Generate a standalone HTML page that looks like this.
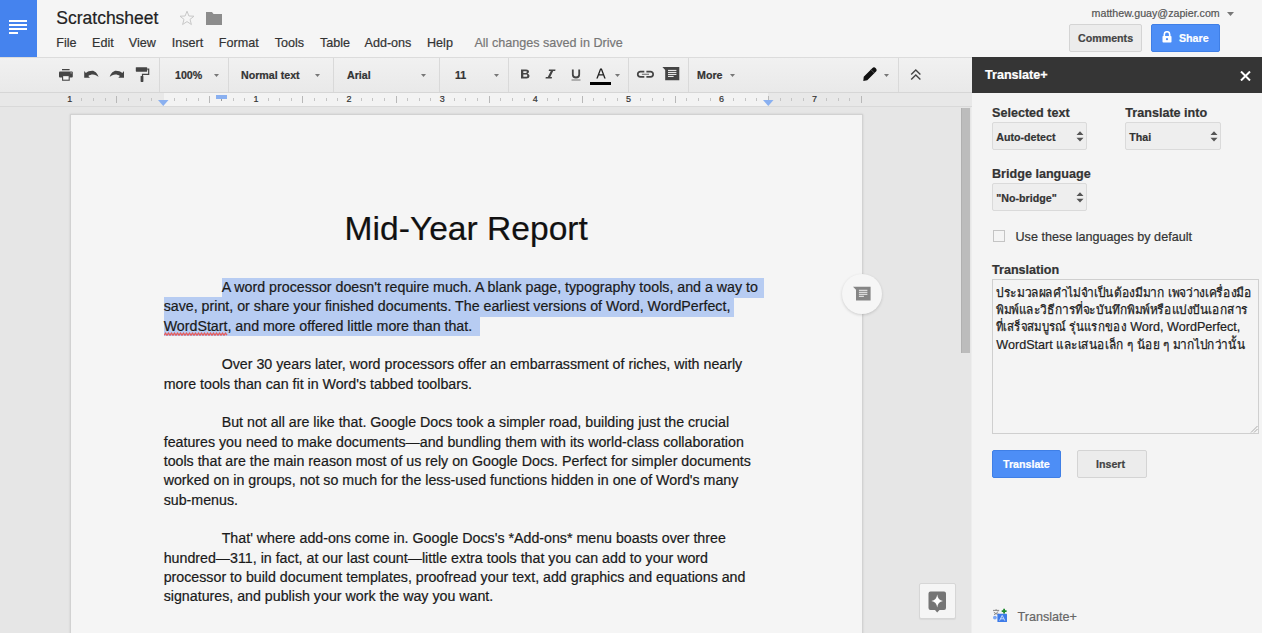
<!DOCTYPE html>
<html><head><meta charset="utf-8"><title>Scratchsheet - Google Docs</title>
<style>
html,body{margin:0;padding:0;}
body{width:1262px;height:633px;overflow:hidden;position:relative;background:#e5e5e5;font-family:"Liberation Sans", sans-serif;}
.t{position:absolute;white-space:nowrap;-webkit-text-stroke:0.2px currentColor;}
</style></head><body>
<div style="position:absolute;left:0px;top:0px;width:1262px;height:57px;background:#f5f5f5"></div>
<div style="position:absolute;left:0px;top:57px;width:972px;height:1px;background:#dcdcdc"></div>
<div style="position:absolute;left:0px;top:58px;width:972px;height:34px;background:linear-gradient(#f1f1f1,#e9e9e9)"></div>
<div style="position:absolute;left:0px;top:92px;width:972px;height:1px;background:#d6d6d6"></div>
<div style="position:absolute;left:0px;top:93px;width:972px;height:13px;background:#e8e8e8"></div>
<div style="position:absolute;left:164px;top:93px;width:604px;height:13px;background:#f3f3f3"></div>
<div style="position:absolute;left:0px;top:106px;width:972px;height:1px;background:#d9d9d9"></div>
<div style="position:absolute;left:0px;top:107px;width:972px;height:526px;background:#e6e6e6"></div>
<div style="position:absolute;left:70px;top:114px;width:793px;height:530px;background:#f5f5f5;border:1px solid #d2d2d2;box-sizing:border-box;box-shadow:0 0 2px rgba(0,0,0,0.12)"></div>
<div style="position:absolute;left:971px;top:107px;width:1px;height:526px;background:#ededed"></div>
<div style="position:absolute;left:961px;top:108px;width:9px;height:245px;background:#bcbcbc;border-left:1px solid #b0b0b0;box-sizing:border-box"></div>
<div style="position:absolute;left:0px;top:0px;width:37px;height:57px;background:#4583ee"></div>
<div style="position:absolute;left:9px;top:20px;width:18px;height:2px;background:#fff"></div>
<div style="position:absolute;left:9px;top:24px;width:18px;height:2px;background:#fff"></div>
<div style="position:absolute;left:9px;top:28px;width:18px;height:2px;background:#fff"></div>
<div style="position:absolute;left:9px;top:32px;width:9px;height:2px;background:#fff"></div>
<div class="t" style="left:56.30px;top:10.39px;font-size:17.5px;line-height:17.5px;font-weight:400;color:#222;">Scratchsheet</div>
<svg style="position:absolute;left:179px;top:10px" width="16" height="16" viewBox="0 0 16 16"><path d="M8 1.2 L9.9 6 L15 6.2 L11 9.4 L12.4 14.5 L8 11.6 L3.6 14.5 L5 9.4 L1 6.2 L6.1 6 Z" fill="none" stroke="#c8c8c8" stroke-width="1"/></svg>
<svg style="position:absolute;left:206px;top:12px" width="16" height="13" viewBox="0 0 16 13"><path d="M0 0 H6 L7.5 2 H16 V13 H0 Z" fill="#8c8c8c"/></svg>
<div class="t" style="left:56.20px;top:36.63px;font-size:12.6px;line-height:12.6px;font-weight:400;color:#333;">File</div>
<div class="t" style="left:92.00px;top:36.63px;font-size:12.6px;line-height:12.6px;font-weight:400;color:#333;">Edit</div>
<div class="t" style="left:128.80px;top:36.63px;font-size:12.6px;line-height:12.6px;font-weight:400;color:#333;">View</div>
<div class="t" style="left:171.70px;top:36.63px;font-size:12.6px;line-height:12.6px;font-weight:400;color:#333;">Insert</div>
<div class="t" style="left:218.80px;top:36.63px;font-size:12.6px;line-height:12.6px;font-weight:400;color:#333;">Format</div>
<div class="t" style="left:274.70px;top:36.63px;font-size:12.6px;line-height:12.6px;font-weight:400;color:#333;">Tools</div>
<div class="t" style="left:319.90px;top:36.63px;font-size:12.6px;line-height:12.6px;font-weight:400;color:#333;">Table</div>
<div class="t" style="left:364.50px;top:36.63px;font-size:12.6px;line-height:12.6px;font-weight:400;color:#333;">Add-ons</div>
<div class="t" style="left:427.00px;top:36.63px;font-size:12.6px;line-height:12.6px;font-weight:400;color:#333;">Help</div>
<div class="t" style="left:474.40px;top:36.63px;font-size:12.6px;line-height:12.6px;font-weight:400;color:#777;">All changes saved in Drive</div>
<div class="t" style="left:1091.60px;top:8.08px;font-size:10.66px;line-height:10.66px;font-weight:400;color:#555;">matthew.guay@zapier.com</div>
<svg style="position:absolute;left:1227px;top:12px" width="7" height="4" viewBox="0 0 7 4"><path d="M0 0 H7 L3.5 4 Z" fill="#777"/></svg>
<div style="position:absolute;left:1069px;top:24px;width:73px;height:28px;background:#ececec;border:1px solid #d4d4d4;border-radius:2px;box-sizing:border-box"></div>
<div class="t" style="left:1078.00px;top:32.98px;font-size:10.66px;line-height:10.66px;font-weight:700;color:#444;">Comments</div>
<div style="position:absolute;left:1151px;top:24px;width:69px;height:28px;background:#4d8ef6;border:1px solid #3f7fe6;border-radius:2px;box-sizing:border-box"></div>
<svg style="position:absolute;left:1162px;top:31px" width="10" height="12" viewBox="0 0 10 12"><path d="M2.3 5 V3.4 A2.7 2.7 0 0 1 7.7 3.4 V5" fill="none" stroke="#fff" stroke-width="1.6"/><rect x="0.5" y="5" width="9" height="6.5" rx="0.8" fill="#fff"/><circle cx="5" cy="8.2" r="1.1" fill="#4d8ef6"/></svg>
<div class="t" style="left:1179.00px;top:32.98px;font-size:10.66px;line-height:10.66px;font-weight:700;color:#fff;">Share</div>
<div style="position:absolute;left:159px;top:58px;width:1px;height:34px;background:#d9d9d9"></div>
<div style="position:absolute;left:228px;top:58px;width:1px;height:34px;background:#d9d9d9"></div>
<div style="position:absolute;left:333px;top:58px;width:1px;height:34px;background:#d9d9d9"></div>
<div style="position:absolute;left:439px;top:58px;width:1px;height:34px;background:#d9d9d9"></div>
<div style="position:absolute;left:508px;top:58px;width:1px;height:34px;background:#d9d9d9"></div>
<div style="position:absolute;left:628px;top:58px;width:1px;height:34px;background:#d9d9d9"></div>
<div style="position:absolute;left:688px;top:58px;width:1px;height:34px;background:#d9d9d9"></div>
<div style="position:absolute;left:898px;top:58px;width:1px;height:34px;background:#d9d9d9"></div>
<svg style="position:absolute;left:59px;top:69px" width="14" height="12" viewBox="0 0 14 12">
<rect x="3" y="0" width="7.6" height="1.3" fill="#444"/><rect x="0" y="2.4" width="13.8" height="6.2" rx="1" fill="#444"/>
<rect x="3.6" y="6.6" width="6.6" height="4.6" fill="#f4f4f4" stroke="#444" stroke-width="1.1"/><rect x="11.6" y="3.4" width="1" height="1" fill="#ddd"/></svg>
<svg style="position:absolute;left:83px;top:70px" width="17" height="9" viewBox="0 0 17 9">
<path d="M1.2 1 V7.7 H6.9 L5.3 5.9 C8 3.9 12.6 3.6 15.5 7.1 C14.3 3 11.5 0.8 9.3 0.8 C6.8 0.8 4.5 1.6 2.9 2.9 Z" fill="#444"/></svg>
<svg style="position:absolute;left:108px;top:70px" width="17" height="9" viewBox="0 0 17 9">
<path transform="translate(17.2,0) scale(-1,1)" d="M1.2 1 V7.7 H6.9 L5.3 5.9 C8 3.9 12.6 3.6 15.5 7.1 C14.3 3 11.5 0.8 9.3 0.8 C6.8 0.8 4.5 1.6 2.9 2.9 Z" fill="#444"/></svg>
<svg style="position:absolute;left:135px;top:66px" width="15" height="17" viewBox="0 0 15 17">
<rect x="0.8" y="1.2" width="11.4" height="4.5" rx="0.6" fill="#444"/><path d="M12.2 3.2 H13.7 V8.4 H7.5 V10" fill="none" stroke="#444" stroke-width="1.2"/>
<rect x="5.6" y="9.9" width="2.8" height="6" rx="0.6" fill="#444"/></svg>
<div class="t" style="left:175.00px;top:69.98px;font-size:10.66px;line-height:10.66px;font-weight:700;color:#333;">100%</div>
<svg style="position:absolute;left:214px;top:73.8px" width="5" height="3" viewBox="0 0 5 3"><path d="M0 0 H5 L2.5 3 Z" fill="#777"/></svg>
<div class="t" style="left:241.00px;top:69.98px;font-size:10.66px;line-height:10.66px;font-weight:700;color:#333;">Normal text</div>
<svg style="position:absolute;left:315px;top:73.8px" width="5" height="3" viewBox="0 0 5 3"><path d="M0 0 H5 L2.5 3 Z" fill="#777"/></svg>
<div class="t" style="left:347.00px;top:69.98px;font-size:10.66px;line-height:10.66px;font-weight:700;color:#333;">Arial</div>
<svg style="position:absolute;left:421px;top:73.8px" width="5" height="3" viewBox="0 0 5 3"><path d="M0 0 H5 L2.5 3 Z" fill="#777"/></svg>
<div class="t" style="left:455.00px;top:69.98px;font-size:10.66px;line-height:10.66px;font-weight:700;color:#333;">11</div>
<svg style="position:absolute;left:494px;top:73.8px" width="5" height="3" viewBox="0 0 5 3"><path d="M0 0 H5 L2.5 3 Z" fill="#777"/></svg>
<svg style="position:absolute;left:520px;top:69px" width="11" height="10" viewBox="0 0 11 10">
<path d="M1 0.5 H6 C8.5 0.5 9 2 9 2.6 C9 3.8 8 4.5 7.5 4.7 C8.5 5 9.5 5.8 9.5 7 C9.5 8.7 8 9.5 6.5 9.5 H1 Z M3.3 2.2 V4 H5.8 C6.6 4 6.9 3.6 6.9 3.1 C6.9 2.6 6.5 2.2 5.8 2.2 Z M3.3 5.6 V7.8 H6.2 C7 7.8 7.3 7.3 7.3 6.7 C7.3 6.1 6.9 5.6 6.1 5.6 Z" fill="#444"/></svg>
<svg style="position:absolute;left:545px;top:69px" width="11" height="10" viewBox="0 0 11 10">
<path d="M4 0.5 H10.5 L10.2 2 H8.2 L5.2 8 H7 L6.7 9.5 H0.5 L0.8 8 H2.8 L5.8 2 H3.7 Z" fill="#444"/></svg>
<svg style="position:absolute;left:571px;top:69px" width="10" height="12" viewBox="0 0 10 12">
<path d="M1.8 0.5 V5.5 C1.8 7.6 3.2 8.5 5 8.5 C6.8 8.5 8.2 7.6 8.2 5.5 V0.5" fill="none" stroke="#444" stroke-width="1.8"/><rect x="0.5" y="10.4" width="9" height="1.2" fill="#888"/></svg>
<svg style="position:absolute;left:596px;top:68px" width="10" height="11" viewBox="0 0 10 11">
<path d="M0.3 10.5 L4.1 0.5 H5.9 L9.7 10.5 H8.2 L7.2 7.6 H2.8 L1.8 10.5 Z M3.3 6.2 H6.7 L5 1.8 Z" fill="#222"/></svg>
<div style="position:absolute;left:590px;top:81.5px;width:21px;height:3.6px;background:#000"></div>
<svg style="position:absolute;left:615px;top:73.8px" width="5" height="3" viewBox="0 0 5 3"><path d="M0 0 H5 L2.5 3 Z" fill="#777"/></svg>
<svg style="position:absolute;left:636px;top:70px" width="19" height="9" viewBox="0 0 19 9">
<path d="M8.3 1.65 H4.35 A2.6 2.6 0 0 0 4.35 6.85 H8.3" fill="none" stroke="#444" stroke-width="1.7"/>
<path d="M10.4 1.65 H14.55 A2.6 2.6 0 0 1 14.55 6.85 H10.4" fill="none" stroke="#444" stroke-width="1.7"/>
<rect x="5.9" y="3.75" width="7.1" height="1" fill="#666"/></svg>
<svg style="position:absolute;left:662px;top:66px" width="18" height="15" viewBox="0 0 18 15">
<path d="M0.4 1 H17.3 V14.2 H3.2 V4 Z" fill="#444"/><rect x="6" y="3.9" width="8.4" height="1.1" fill="#e6e6e6"/><rect x="6" y="5.9" width="8.4" height="1.1" fill="#e6e6e6"/><rect x="6" y="7.9" width="8.4" height="1.1" fill="#e6e6e6"/><rect x="6" y="9.9" width="5.6" height="1.1" fill="#e6e6e6"/></svg>
<div class="t" style="left:697.00px;top:69.98px;font-size:10.66px;line-height:10.66px;font-weight:700;color:#333;">More</div>
<svg style="position:absolute;left:729.5px;top:73.8px" width="5" height="3" viewBox="0 0 5 3"><path d="M0 0 H5 L2.5 3 Z" fill="#777"/></svg>
<svg style="position:absolute;left:862px;top:67px" width="15" height="15" viewBox="0 0 15 15">
<path d="M10.23 1.23 A2.5 2.5 0 0 1 13.77 4.77 L5.27 13.27 L1.3 13.9 L1.73 9.73 Z" fill="#111"/>
<path d="M8.9 2.6 L12.4 6.1" stroke="#888" stroke-width="0.6"/></svg>
<svg style="position:absolute;left:884px;top:73.6px" width="5" height="3" viewBox="0 0 5 3"><path d="M0 0 H5 L2.5 3 Z" fill="#777"/></svg>
<svg style="position:absolute;left:910px;top:69px" width="12" height="12" viewBox="0 0 12 12">
<path d="M1.2 5.4 L5.8 1 L10.4 5.4 M1.2 10.4 L5.8 6 L10.4 10.4" fill="none" stroke="#444" stroke-width="1.4"/></svg>
<div style="position:absolute;left:81px;top:98px;width:1px;height:3px;background:#c4c4c4"></div>
<div style="position:absolute;left:93px;top:98px;width:1px;height:3px;background:#c4c4c4"></div>
<div style="position:absolute;left:105px;top:98px;width:1px;height:3px;background:#c4c4c4"></div>
<div style="position:absolute;left:116px;top:96px;width:1px;height:6.5px;background:#b8b8b8"></div>
<div style="position:absolute;left:128px;top:98px;width:1px;height:3px;background:#c4c4c4"></div>
<div style="position:absolute;left:140px;top:98px;width:1px;height:3px;background:#c4c4c4"></div>
<div style="position:absolute;left:151px;top:98px;width:1px;height:3px;background:#c4c4c4"></div>
<div style="position:absolute;left:174px;top:98px;width:1px;height:3px;background:#c4c4c4"></div>
<div style="position:absolute;left:186px;top:98px;width:1px;height:3px;background:#c4c4c4"></div>
<div style="position:absolute;left:198px;top:98px;width:1px;height:3px;background:#c4c4c4"></div>
<div style="position:absolute;left:209px;top:96px;width:1px;height:6.5px;background:#b8b8b8"></div>
<div style="position:absolute;left:221px;top:98px;width:1px;height:3px;background:#c4c4c4"></div>
<div style="position:absolute;left:233px;top:98px;width:1px;height:3px;background:#c4c4c4"></div>
<div style="position:absolute;left:244px;top:98px;width:1px;height:3px;background:#c4c4c4"></div>
<div style="position:absolute;left:268px;top:98px;width:1px;height:3px;background:#c4c4c4"></div>
<div style="position:absolute;left:279px;top:98px;width:1px;height:3px;background:#c4c4c4"></div>
<div style="position:absolute;left:291px;top:98px;width:1px;height:3px;background:#c4c4c4"></div>
<div style="position:absolute;left:302px;top:96px;width:1px;height:6.5px;background:#b8b8b8"></div>
<div style="position:absolute;left:314px;top:98px;width:1px;height:3px;background:#c4c4c4"></div>
<div style="position:absolute;left:326px;top:98px;width:1px;height:3px;background:#c4c4c4"></div>
<div style="position:absolute;left:337px;top:98px;width:1px;height:3px;background:#c4c4c4"></div>
<div style="position:absolute;left:361px;top:98px;width:1px;height:3px;background:#c4c4c4"></div>
<div style="position:absolute;left:372px;top:98px;width:1px;height:3px;background:#c4c4c4"></div>
<div style="position:absolute;left:384px;top:98px;width:1px;height:3px;background:#c4c4c4"></div>
<div style="position:absolute;left:396px;top:96px;width:1px;height:6.5px;background:#b8b8b8"></div>
<div style="position:absolute;left:407px;top:98px;width:1px;height:3px;background:#c4c4c4"></div>
<div style="position:absolute;left:419px;top:98px;width:1px;height:3px;background:#c4c4c4"></div>
<div style="position:absolute;left:430px;top:98px;width:1px;height:3px;background:#c4c4c4"></div>
<div style="position:absolute;left:454px;top:98px;width:1px;height:3px;background:#c4c4c4"></div>
<div style="position:absolute;left:465px;top:98px;width:1px;height:3px;background:#c4c4c4"></div>
<div style="position:absolute;left:477px;top:98px;width:1px;height:3px;background:#c4c4c4"></div>
<div style="position:absolute;left:489px;top:96px;width:1px;height:6.5px;background:#b8b8b8"></div>
<div style="position:absolute;left:500px;top:98px;width:1px;height:3px;background:#c4c4c4"></div>
<div style="position:absolute;left:512px;top:98px;width:1px;height:3px;background:#c4c4c4"></div>
<div style="position:absolute;left:524px;top:98px;width:1px;height:3px;background:#c4c4c4"></div>
<div style="position:absolute;left:547px;top:98px;width:1px;height:3px;background:#c4c4c4"></div>
<div style="position:absolute;left:558px;top:98px;width:1px;height:3px;background:#c4c4c4"></div>
<div style="position:absolute;left:570px;top:98px;width:1px;height:3px;background:#c4c4c4"></div>
<div style="position:absolute;left:582px;top:96px;width:1px;height:6.5px;background:#b8b8b8"></div>
<div style="position:absolute;left:593px;top:98px;width:1px;height:3px;background:#c4c4c4"></div>
<div style="position:absolute;left:605px;top:98px;width:1px;height:3px;background:#c4c4c4"></div>
<div style="position:absolute;left:617px;top:98px;width:1px;height:3px;background:#c4c4c4"></div>
<div style="position:absolute;left:640px;top:98px;width:1px;height:3px;background:#c4c4c4"></div>
<div style="position:absolute;left:652px;top:98px;width:1px;height:3px;background:#c4c4c4"></div>
<div style="position:absolute;left:663px;top:98px;width:1px;height:3px;background:#c4c4c4"></div>
<div style="position:absolute;left:675px;top:96px;width:1px;height:6.5px;background:#b8b8b8"></div>
<div style="position:absolute;left:686px;top:98px;width:1px;height:3px;background:#c4c4c4"></div>
<div style="position:absolute;left:698px;top:98px;width:1px;height:3px;background:#c4c4c4"></div>
<div style="position:absolute;left:710px;top:98px;width:1px;height:3px;background:#c4c4c4"></div>
<div style="position:absolute;left:733px;top:98px;width:1px;height:3px;background:#c4c4c4"></div>
<div style="position:absolute;left:745px;top:98px;width:1px;height:3px;background:#c4c4c4"></div>
<div style="position:absolute;left:756px;top:98px;width:1px;height:3px;background:#c4c4c4"></div>
<div style="position:absolute;left:768px;top:96px;width:1px;height:6.5px;background:#b8b8b8"></div>
<div style="position:absolute;left:780px;top:98px;width:1px;height:3px;background:#c4c4c4"></div>
<div style="position:absolute;left:791px;top:98px;width:1px;height:3px;background:#c4c4c4"></div>
<div style="position:absolute;left:803px;top:98px;width:1px;height:3px;background:#c4c4c4"></div>
<div style="position:absolute;left:826px;top:98px;width:1px;height:3px;background:#c4c4c4"></div>
<div style="position:absolute;left:838px;top:98px;width:1px;height:3px;background:#c4c4c4"></div>
<div style="position:absolute;left:849px;top:98px;width:1px;height:3px;background:#c4c4c4"></div>
<div style="position:absolute;left:861px;top:96px;width:1px;height:6.5px;background:#b8b8b8"></div>
<div class="t" style="left:67.30px;top:95.08px;font-size:9px;line-height:9px;font-weight:400;color:#333;">1</div>
<div class="t" style="left:253.50px;top:95.08px;font-size:9px;line-height:9px;font-weight:400;color:#333;">1</div>
<div class="t" style="left:346.60px;top:95.08px;font-size:9px;line-height:9px;font-weight:400;color:#333;">2</div>
<div class="t" style="left:439.70px;top:95.08px;font-size:9px;line-height:9px;font-weight:400;color:#333;">3</div>
<div class="t" style="left:532.80px;top:95.08px;font-size:9px;line-height:9px;font-weight:400;color:#333;">4</div>
<div class="t" style="left:625.90px;top:95.08px;font-size:9px;line-height:9px;font-weight:400;color:#333;">5</div>
<div class="t" style="left:719.00px;top:95.08px;font-size:9px;line-height:9px;font-weight:400;color:#333;">6</div>
<div class="t" style="left:812.10px;top:95.08px;font-size:9px;line-height:9px;font-weight:400;color:#333;">7</div>
<svg style="position:absolute;left:158px;top:99.8px" width="11" height="6" viewBox="0 0 11 6"><path d="M0 0 H10.5 L5.25 6 Z" fill="#8ab0f0"/></svg>
<div style="position:absolute;left:216px;top:95px;width:11px;height:3.7px;background:#8ab0f0"></div>
<div style="position:absolute;left:221px;top:98.7px;width:1px;height:2px;background:#999"></div>
<svg style="position:absolute;left:762.8px;top:99.7px" width="11" height="6" viewBox="0 0 11 6"><path d="M0 0 H10.5 L5.25 6 Z" fill="#8ab0f0"/></svg>
<div class="t" style="left:344.60px;top:211.76px;font-size:33.6px;line-height:33.6px;font-weight:400;color:#111;">Mid-Year Report</div>
<div style="position:absolute;left:222px;top:278px;width:542px;height:19.5px;background:#b7ccf2"></div>
<div style="position:absolute;left:164px;top:297.3px;width:570px;height:19.5px;background:#b7ccf2"></div>
<div style="position:absolute;left:164px;top:316.7px;width:316px;height:19.3px;background:#b7ccf2"></div>
<div class="t" style="left:221.70px;top:280.16px;font-size:14.22px;line-height:14.22px;font-weight:400;color:#1a1a1a;white-space:pre">A word processor doesn't require much. A blank page, typography tools, and a way to</div>
<div class="t" style="left:163.70px;top:299.49px;font-size:14.22px;line-height:14.22px;font-weight:400;color:#1a1a1a;white-space:pre">save, print, or share your finished documents. The earliest versions of Word, WordPerfect,</div>
<div class="t" style="left:163.70px;top:318.82px;font-size:14.22px;line-height:14.22px;font-weight:400;color:#1a1a1a;white-space:pre">WordStart, and more offered little more than that.</div>
<div class="t" style="left:221.70px;top:357.48px;font-size:14.22px;line-height:14.22px;font-weight:400;color:#1a1a1a;white-space:pre">Over 30 years later, word processors offer an embarrassment of riches, with nearly</div>
<div class="t" style="left:163.70px;top:376.81px;font-size:14.22px;line-height:14.22px;font-weight:400;color:#1a1a1a;white-space:pre">more tools than can fit in Word's tabbed toolbars.</div>
<div class="t" style="left:221.70px;top:415.47px;font-size:14.22px;line-height:14.22px;font-weight:400;color:#1a1a1a;white-space:pre">But not all are like that. Google Docs took a simpler road, building just the crucial</div>
<div class="t" style="left:163.70px;top:434.80px;font-size:14.22px;line-height:14.22px;font-weight:400;color:#1a1a1a;white-space:pre">features you need to make documents—and bundling them with its world-class collaboration</div>
<div class="t" style="left:163.70px;top:454.13px;font-size:14.22px;line-height:14.22px;font-weight:400;color:#1a1a1a;white-space:pre">tools that are the main reason most of us rely on Google Docs. Perfect for simpler documents</div>
<div class="t" style="left:163.70px;top:473.46px;font-size:14.22px;line-height:14.22px;font-weight:400;color:#1a1a1a;white-space:pre">worked on in groups, not so much for the less-used functions hidden in one of Word's many</div>
<div class="t" style="left:163.70px;top:492.79px;font-size:14.22px;line-height:14.22px;font-weight:400;color:#1a1a1a;white-space:pre">sub-menus.</div>
<div class="t" style="left:221.70px;top:531.45px;font-size:14.22px;line-height:14.22px;font-weight:400;color:#1a1a1a;white-space:pre">That' where add-ons come in. Google Docs's *Add-ons* menu boasts over three</div>
<div class="t" style="left:163.70px;top:550.78px;font-size:14.22px;line-height:14.22px;font-weight:400;color:#1a1a1a;white-space:pre">hundred—311, in fact, at our last count—little extra tools that you can add to your word</div>
<div class="t" style="left:163.70px;top:570.11px;font-size:14.22px;line-height:14.22px;font-weight:400;color:#1a1a1a;white-space:pre">processor to build document templates, proofread your text, add graphics and equations and</div>
<div class="t" style="left:163.70px;top:589.44px;font-size:14.22px;line-height:14.22px;font-weight:400;color:#1a1a1a;white-space:pre">signatures, and publish your work the way you want.</div>
<svg style="position:absolute;left:164px;top:331.5px" width="65" height="4" viewBox="0 0 65 4"><path d="M0.3 3.2 L1.5 1.2 L3 3.2 L4.5 1.2 L6 3.2 L7.5 1.2 L9 3.2 L10.5 1.2 L12 3.2 L13.5 1.2 L15 3.2 L16.5 1.2 L18 3.2 L19.5 1.2 L21 3.2 L22.5 1.2 L24 3.2 L25.5 1.2 L27 3.2 L28.5 1.2 L30 3.2 L31.5 1.2 L33 3.2 L34.5 1.2 L36 3.2 L37.5 1.2 L39 3.2 L40.5 1.2 L42 3.2 L43.5 1.2 L45 3.2 L46.5 1.2 L48 3.2 L49.5 1.2 L51 3.2 L52.5 1.2 L54 3.2 L55.5 1.2 L57 3.2 L58.5 1.2 L60 3.2 L61.5 1.2 L63 3.2" fill="none" stroke="#e45c5c" stroke-width="1.3" stroke-linejoin="miter"/></svg>
<div style="position:absolute;left:842px;top:274px;width:40px;height:40px;border-radius:50%;background:#f6f6f6;box-shadow:0 1px 3px rgba(0,0,0,0.16)"></div>
<svg style="position:absolute;left:852px;top:286px" width="20" height="16" viewBox="0 0 20 16">
<path d="M1 0.8 H18.6 V14.5 H4 V3.8 Z" fill="#858585"/><rect x="6.9" y="3.8" width="8.5" height="1" fill="#f0f0f0"/><rect x="6.9" y="5.8" width="8.5" height="1" fill="#f0f0f0"/><rect x="6.9" y="7.8" width="8.5" height="1" fill="#f0f0f0"/><rect x="6.9" y="9.8" width="5" height="1" fill="#f0f0f0"/></svg>
<div style="position:absolute;left:919px;top:583px;width:37px;height:36px;background:#f5f5f5;border:1px solid #d6d6d6;border-radius:2px;box-sizing:border-box;box-shadow:0 1px 1px rgba(0,0,0,0.06)"></div>
<svg style="position:absolute;left:928px;top:590.7px" width="19" height="22" viewBox="0 0 19 22">
<path d="M2.5 0.5 H16 A2 2 0 0 1 18 2.5 V17 A2 2 0 0 1 16 19 H11.5 L9.2 21.5 L7 19 H2.5 A2 2 0 0 1 0.5 17 V2.5 A2 2 0 0 1 2.5 0.5 Z" fill="#757575"/>
<path d="M9.2 3.5 Q9.8 9.1 15 10 Q9.8 10.9 9.2 16.5 Q8.6 10.9 3.4 10 Q8.6 9.1 9.2 3.5 Z" fill="#fff"/></svg>
<div style="position:absolute;left:972px;top:57px;width:290px;height:576px;background:#f4f4f4"></div>
<div style="position:absolute;left:972px;top:57px;width:290px;height:36px;background:#353535"></div>
<div class="t" style="left:985.00px;top:69.43px;font-size:12.6px;line-height:12.6px;font-weight:700;color:#fff;">Translate+</div>
<svg style="position:absolute;left:1240px;top:71px" width="11" height="10" viewBox="0 0 11 10">
<path d="M1 0.5 L10 9.5 M10 0.5 L1 9.5" stroke="#fff" stroke-width="2"/></svg>
<div class="t" style="left:992.00px;top:106.53px;font-size:12.6px;line-height:12.6px;font-weight:700;color:#333;">Selected text</div>
<div class="t" style="left:1125.30px;top:106.53px;font-size:12.6px;line-height:12.6px;font-weight:700;color:#333;">Translate into</div>
<div style="position:absolute;left:992px;top:122px;width:95px;height:28px;background:#eeeeee;border:1px solid #dadada;border-radius:2px;box-sizing:border-box"></div>
<div class="t" style="left:996.30px;top:131.78px;font-size:10.66px;line-height:10.66px;font-weight:700;color:#333;">Auto-detect</div>
<svg style="position:absolute;left:1076px;top:131px" width="8" height="11" viewBox="0 0 8 11"><path d="M0.5 4 L4 0.3 L7.5 4 Z M0.5 6.8 L4 10.5 L7.5 6.8 Z" fill="#555"/></svg>
<div style="position:absolute;left:1125px;top:122px;width:96px;height:28px;background:#eeeeee;border:1px solid #dadada;border-radius:2px;box-sizing:border-box"></div>
<div class="t" style="left:1129.30px;top:131.78px;font-size:10.66px;line-height:10.66px;font-weight:700;color:#333;">Thai</div>
<svg style="position:absolute;left:1210px;top:131px" width="8" height="11" viewBox="0 0 8 11"><path d="M0.5 4 L4 0.3 L7.5 4 Z M0.5 6.8 L4 10.5 L7.5 6.8 Z" fill="#555"/></svg>
<div class="t" style="left:992.00px;top:167.63px;font-size:12.6px;line-height:12.6px;font-weight:700;color:#333;">Bridge language</div>
<div style="position:absolute;left:992px;top:183px;width:95px;height:28px;background:#eeeeee;border:1px solid #dadada;border-radius:2px;box-sizing:border-box"></div>
<div class="t" style="left:996.30px;top:192.78px;font-size:10.66px;line-height:10.66px;font-weight:700;color:#333;">"No-bridge"</div>
<svg style="position:absolute;left:1076px;top:192px" width="8" height="11" viewBox="0 0 8 11"><path d="M0.5 4 L4 0.3 L7.5 4 Z M0.5 6.8 L4 10.5 L7.5 6.8 Z" fill="#555"/></svg>
<div style="position:absolute;left:993px;top:230px;width:12px;height:12px;background:#f4f4f4;border:1px solid #c4c4c4;box-sizing:border-box"></div>
<div class="t" style="left:1015.50px;top:230.93px;font-size:12.6px;line-height:12.6px;font-weight:400;color:#333;">Use these languages by default</div>
<div class="t" style="left:992.00px;top:263.73px;font-size:12.6px;line-height:12.6px;font-weight:700;color:#333;">Translation</div>
<div style="position:absolute;left:992px;top:279px;width:267px;height:155px;background:#f4f4f4;border:1px solid #cfcfcf;box-sizing:border-box"></div>
<div class="t th" style="left:996.30px;top:286.73px;font-size:12.6px;line-height:12.6px;color:#222;-webkit-text-stroke:0.25px #222;transform-origin:0 50%">ประมวลผลคำไม่จำเป็นต้องมีมาก เพจว่างเครื่องมือ</div>
<div class="t th" style="left:996.30px;top:304.23px;font-size:12.6px;line-height:12.6px;color:#222;-webkit-text-stroke:0.25px #222;transform-origin:0 50%">พิมพ์และวิธีการที่จะบันทึกพิมพ์หรือแบ่งปันเอกสาร</div>
<div class="t th" style="left:996.30px;top:321.33px;font-size:12.6px;line-height:12.6px;color:#222;-webkit-text-stroke:0.25px #222;transform-origin:0 50%">ที่เสร็จสมบูรณ์ รุ่นแรกของ</div>
<div class="t" style="left:1130.20px;top:321.33px;font-size:12.6px;line-height:12.6px;font-weight:400;color:#222;white-space:pre">Word, WordPerfect,</div>
<div class="t" style="left:996.30px;top:338.63px;font-size:12.6px;line-height:12.6px;font-weight:400;color:#222;white-space:pre">WordStart</div>
<div class="t th" style="left:1056.00px;top:338.63px;font-size:12.6px;line-height:12.6px;color:#222;-webkit-text-stroke:0.25px #222;transform-origin:0 50%">และเสนอเล็ก ๆ น้อย ๆ มากไปกว่านั้น</div>
<svg style="position:absolute;left:1250px;top:425px" width="8" height="8" viewBox="0 0 8 8"><path d="M1 7.5 L7.5 1 M4 7.5 L7.5 4" stroke="#999" stroke-width="0.8"/></svg>
<div style="position:absolute;left:992px;top:450px;width:69px;height:28px;background:#4d8ef6;border:1px solid #3f7fe6;border-radius:2px;box-sizing:border-box"></div>
<div class="t" style="left:1003.00px;top:458.98px;font-size:10.66px;line-height:10.66px;font-weight:700;color:#fff;">Translate</div>
<div style="position:absolute;left:1077px;top:450px;width:70px;height:28px;background:#ececec;border:1px solid #d4d4d4;border-radius:2px;box-sizing:border-box"></div>
<div class="t" style="left:1096.00px;top:458.98px;font-size:10.66px;line-height:10.66px;font-weight:700;color:#444;">Insert</div>
<svg style="position:absolute;left:992px;top:608px" width="16" height="15" viewBox="0 0 16 15">
<path d="M1 2.4 H7.2 M4.1 1.2 V2.6 M1.8 4.2 Q4 6.4 6.8 6.2 M6 3.4 Q4.8 6 2 6.6" fill="none" stroke="#888" stroke-width="1"/>
<circle cx="2.9" cy="9.6" r="1.9" fill="#7aa6f2"/>
<rect x="5.4" y="5.7" width="9.6" height="8.4" rx="0.6" fill="#3d7be8"/>
<path d="M7.6 12.6 L10.2 7.4 L12.8 12.6 M8.6 10.8 H11.8" fill="none" stroke="#d6e2fa" stroke-width="0.9"/>
<path d="M12.1 0.8 V5.6 M9.7 3.2 H14.6" stroke="#1f8a2c" stroke-width="1.8"/></svg>
<div class="t" style="left:1017.50px;top:610.83px;font-size:12.6px;line-height:12.6px;font-weight:400;color:#666;">Translate+</div>
<script>(function(){var W=[255.5, 252.0, 130.0, 189.0];function f(){var e=document.querySelectorAll('.th');for(var i=0;i<e.length;i++){e[i].style.transform='none';var w=e[i].getBoundingClientRect().width;if(w>0)e[i].style.transform='scaleX('+(W[i]/w)+')';}}f();window.addEventListener('load',f);if(document.fonts&&document.fonts.ready)document.fonts.ready.then(f);})();</script>
</body></html>
